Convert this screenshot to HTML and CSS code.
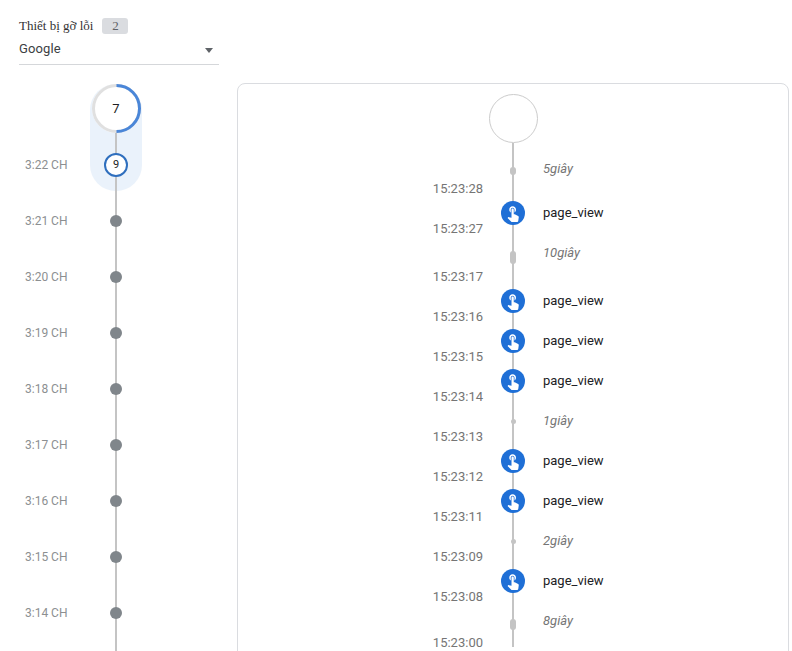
FILE: index.html
```html
<!DOCTYPE html>
<html lang="vi">
<head>
<meta charset="utf-8">
<title>Thiết bị gỡ lỗi</title>
<link rel="stylesheet" href="styles.css">
</head>
<body>
<svg class="defs" width="0" height="0" aria-hidden="true">
  <symbol id="touch" viewBox="0 0 24 24"><path d="M9 11.24V7.5C9 6.12 10.12 5 11.5 5S14 6.12 14 7.5v3.74c1.21-.81 2-2.18 2-3.74C16 5.01 13.99 3 11.5 3S7 5.01 7 7.5c0 1.56.79 2.93 2 3.74zm9.84 4.63l-4.54-2.26c-.17-.07-.35-.11-.54-.11H13v-6c0-.83-.67-1.5-1.5-1.5S10 6.67 10 7.5v10.74l-3.43-.72c-.08-.01-.15-.03-.24-.03-.31 0-.59.13-.79.33l-.79.8 4.94 4.94c.27.27.65.44 1.06.44h6.79c.75 0 1.33-.55 1.44-1.28l.75-5.27c.01-.07.02-.14.02-.2 0-.62-.38-1.16-.91-1.38z"/></symbol>
</svg>
<header class="head">
  <div class="title-row"><span class="title">Thiết bị gỡ lỗi</span><span class="badge">2</span></div>
  <div class="select"><span>Google</span><i class="caret"></i></div>
</header>
<main class="main">
  <aside class="minutes">
    <div class="times">
      <div class="minute">3:22 CH</div>
      <div class="minute">3:21 CH</div>
      <div class="minute">3:20 CH</div>
      <div class="minute">3:19 CH</div>
      <div class="minute">3:18 CH</div>
      <div class="minute">3:17 CH</div>
      <div class="minute">3:16 CH</div>
      <div class="minute">3:15 CH</div>
      <div class="minute">3:14 CH</div>
      <div class="minute"></div>
    </div>
    <div class="track">
      <div class="pill">
        <div class="ring">
          <svg class="ring-svg" width="49" height="49" viewBox="0 0 49 49"><circle class="ring-bg" cx="24.5" cy="24.5" r="23"/><path class="ring-arc" d="M24.5 1.5a23 23 0 0 1 0 46"/></svg>
          <span class="ring-num">7</span>
        </div>
        <div class="active-dot">9</div>
      </div>
      <div class="slot"><i class="dot"></i></div>
      <div class="slot"><i class="dot"></i></div>
      <div class="slot"><i class="dot"></i></div>
      <div class="slot"><i class="dot"></i></div>
      <div class="slot"><i class="dot"></i></div>
      <div class="slot"><i class="dot"></i></div>
      <div class="slot"><i class="dot"></i></div>
      <div class="slot"><i class="dot"></i></div>
      <div class="slot"><i class="dot"></i></div>
    </div>
  </aside>
  <section class="card">
    <div class="start"></div>
    <div class="stem"></div>
    <div class="row gap h44"><time>15:23:28</time><div class="mark"><i class="bar b8"></i></div><em>5giây</em></div>
    <div class="row event"><time>15:23:27</time><div class="mark"><span class="ev"><svg width="18" height="18"><use href="#touch"/></svg></span></div><span class="name">page_view</span></div>
    <div class="row gap h48"><time>15:23:17</time><div class="mark"><i class="bar b13"></i></div><em>10giây</em></div>
    <div class="row event"><time>15:23:16</time><div class="mark"><span class="ev"><svg width="18" height="18"><use href="#touch"/></svg></span></div><span class="name">page_view</span></div>
    <div class="row event"><time>15:23:15</time><div class="mark"><span class="ev"><svg width="18" height="18"><use href="#touch"/></svg></span></div><span class="name">page_view</span></div>
    <div class="row event"><time>15:23:14</time><div class="mark"><span class="ev"><svg width="18" height="18"><use href="#touch"/></svg></span></div><span class="name">page_view</span></div>
    <div class="row gap h40"><time>15:23:13</time><div class="mark"><i class="bar b5"></i></div><em>1giây</em></div>
    <div class="row event"><time>15:23:12</time><div class="mark"><span class="ev"><svg width="18" height="18"><use href="#touch"/></svg></span></div><span class="name">page_view</span></div>
    <div class="row event"><time>15:23:11</time><div class="mark"><span class="ev"><svg width="18" height="18"><use href="#touch"/></svg></span></div><span class="name">page_view</span></div>
    <div class="row gap h40"><time>15:23:09</time><div class="mark"><i class="bar b5"></i></div><em>2giây</em></div>
    <div class="row event"><time>15:23:08</time><div class="mark"><span class="ev"><svg width="18" height="18"><use href="#touch"/></svg></span></div><span class="name">page_view</span></div>
    <div class="row gap h46"><time>15:23:00</time><div class="mark"><i class="bar b11"></i></div><em>8giây</em></div>
  </section>
</main>
</body>
</html>
```
FILE: styles.css
```css
html, body { margin: 0; padding: 0; height: 100%; overflow: hidden; background: #fff; }
body { font-family: Roboto, "Liberation Sans", sans-serif; font-size: 13px; color: #202124; }
.defs { position: absolute; }

.head { padding: 18px 0 0 19px; width: 200px; }
.title-row { display: flex; align-items: center; height: 16px; gap: 9px; }
.title { font-family: "Liberation Serif", serif; font-size: 13px; color: #333; }
.badge { width: 26px; height: 16px; line-height: 16px; text-align: center; background: #dadce0; border-radius: 3px; font-family: "Liberation Serif", serif; font-size: 13px; color: #5f6368; }
.select { display: flex; align-items: center; justify-content: space-between; height: 24px; margin-top: 6px; padding: 0 6px 0 0; border-bottom: 1px solid #d5d7da; color: #3c4043; font-size: 13px; letter-spacing: .1px; }
.select span { margin-top: -8px; }
.caret { width: 0; height: 0; border-left: 4px solid transparent; border-right: 4px solid transparent; border-top: 5px solid #5f6368; margin-top: -4px; }

.main { display: flex; margin-top: 18px; padding: 0 3px 0 19px; align-items: flex-start; }
.minutes { display: flex; width: 218px; flex: none; padding-top: 1px; }
.times { width: 71px; box-sizing: border-box; padding: 53px 0 0 6px; }
.minute { height: 56px; line-height: 56px; font-size: 12px; color: #8c8f91; }
.track { width: 52px; background: linear-gradient(#c4c4c4, #c4c4c4) center 25px / 2px 100% no-repeat; }
.pill { height: 107px; background: linear-gradient(#c4c4c4, #c4c4c4) center 25px / 2px 100% no-repeat, #eaf2fb; border-radius: 26px; display: flex; flex-direction: column; align-items: center; }
.ring { width: 49px; height: 49px; position: relative; background: #fff; border-radius: 50%; display: flex; align-items: center; justify-content: center; }
.ring-svg { position: absolute; inset: 0; }
.ring-bg { fill: none; stroke: #e0e0e0; stroke-width: 3; }
.ring-arc { fill: none; stroke: #4a86d8; stroke-width: 3; }
.ring-num { position: relative; font-size: 13px; color: #202124; }
.active-dot { width: 24px; height: 24px; box-sizing: border-box; margin-top: 20px; border: 2px solid #2f6fbe; border-radius: 50%; background: #fff; font-size: 11px; line-height: 20px; text-align: center; color: #202124; }
.slot { height: 56px; display: flex; align-items: center; justify-content: center; position: relative; top: 2px; }
.dot { width: 12px; height: 12px; border-radius: 50%; background: #80868b; }

.card { flex: 1; box-sizing: border-box; height: 700px; border: 1px solid #dadce0; border-radius: 8px; padding-top: 10px; }
.start { width: 49px; height: 49px; box-sizing: border-box; margin: 0 auto; border: 1px solid #ccc; border-radius: 50%; }
.stem { width: 2px; height: 6px; margin: 0 auto; background: #c4c4c4; }
.row { display: grid; grid-template-columns: 1fr 60px 1fr; height: 40px; }
.row.h44 { height: 44px; }
.row.h48 { height: 48px; }
.row.h46 { height: 46px; }
.row time { align-self: end; margin-bottom: -4px; line-height: 16px; text-align: right; font-size: 13px; color: #757575; position: relative; }
.mark { display: flex; align-items: center; justify-content: center; background: linear-gradient(#c4c4c4, #c4c4c4) center / 2px 100% no-repeat; }
.bar { width: 6px; border-radius: 3px; background: #c4c4c4; }
.b8 { height: 8px; }
.b13 { height: 13px; }
.b11 { height: 11px; }
.b5 { width: 5px; height: 5px; }
.ev { width: 24px; height: 24px; border-radius: 50%; background: #1f6fd6; display: flex; align-items: center; justify-content: center; }
.ev svg { fill: #fff; }
.name { align-self: center; color: #202124; font-size: 13px; margin-top: -1px; }
.row em { align-self: start; margin-top: 12px; line-height: 16px; font-style: italic; color: #757575; font-size: 13px; }
```
